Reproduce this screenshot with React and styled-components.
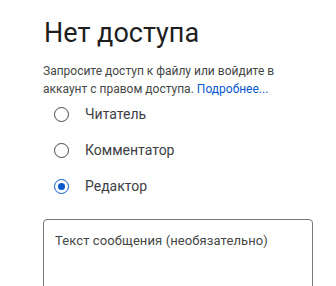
import React, { useState } from 'react';
import styled, { createGlobalStyle } from 'styled-components';

const GlobalStyle = createGlobalStyle`
  html, body {
    margin: 0;
    padding: 0;
    background: #fff;
  }
  body {
    font-family: Roboto, "Noto Sans", Arial, sans-serif;
    overflow: hidden;
  }
`;

const Page = styled.div`
  width: 336px;
  height: 286px;
  box-sizing: border-box;
  padding: 15px 24px 0 43px;
  overflow: hidden;
  background: #fff;
`;

const Title = styled.h1`
  margin: 0;
  font-size: 27px;
  line-height: 36px;
  font-weight: 400;
  color: #1f1f1f;
  padding-left: 1px;
`;

const Description = styled.p`
  margin: 11px 0 0;
  font-size: 12px;
  line-height: 18px;
  color: #444746;
`;

const Line = styled.span`
  display: block;
`;

const MoreLink = styled.a`
  color: #0b57d0;
  text-decoration: none;
  margin-left: 3px;
`;

const RoleList = styled.div`
  display: flex;
  flex-direction: column;
  margin-top: -2px;
`;

const Option = styled.label`
  display: flex;
  align-items: center;
  gap: 16px;
  height: 36px;
  padding-left: 11px;
  cursor: pointer;
  font-size: 14px;
  color: #3c4043;
`;

const Radio = styled.span`
  box-sizing: border-box;
  width: 15px;
  height: 15px;
  border-radius: 50%;
  border: 1.5px solid ${(p) => (p.checked ? '#0b57d0' : '#444746')};
  display: flex;
  align-items: center;
  justify-content: center;
  &::after {
    content: '';
    width: 7px;
    height: 7px;
    border-radius: 50%;
    background: #0b57d0;
    display: ${(p) => (p.checked ? 'block' : 'none')};
  }
`;

const MessageBox = styled.div`
  box-sizing: border-box;
  margin-top: 15px;
  width: 270px;
  height: 100px;
  border: 1px solid #747775;
  border-radius: 4px;
  padding: 12px 11px;
  font-size: 13px;
  line-height: 18px;
  letter-spacing: 0.1px;
  color: #444746;
`;

const roles = ['Читатель', 'Комментатор', 'Редактор'];

const App = () => {
  const [role, setRole] = useState('Редактор');
  return (
    <>
      <GlobalStyle />
      <Page>
        <Title>Нет доступа</Title>
        <Description>
          <Line>Запросите доступ к файлу или войдите в</Line>
          <Line>
            <span>аккаунт с правом доступа.</span>
            <MoreLink href="#">Подробнее...</MoreLink>
          </Line>
        </Description>
        <RoleList>
          {roles.map((r) => (
            <Option key={r} onClick={() => setRole(r)}>
              <Radio checked={role === r} />
              {r}
            </Option>
          ))}
        </RoleList>
        <MessageBox>Текст сообщения (необязательно)</MessageBox>
      </Page>
    </>
  );
};

export default App;
